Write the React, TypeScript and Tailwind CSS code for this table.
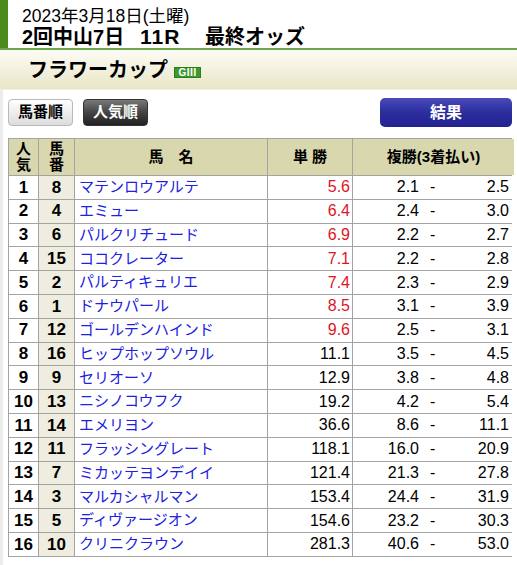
import React from "react";

type Row = { pop: number; num: number; name: string; win: string; red: boolean; lo: string; hi: string };

const rows: Row[] = [
  { pop: 1, num: 8, name: "マテンロウアルテ", win: "5.6", red: true, lo: "2.1", hi: "2.5" },
  { pop: 2, num: 4, name: "エミュー", win: "6.4", red: true, lo: "2.4", hi: "3.0" },
  { pop: 3, num: 6, name: "パルクリチュード", win: "6.9", red: true, lo: "2.2", hi: "2.7" },
  { pop: 4, num: 15, name: "ココクレーター", win: "7.1", red: true, lo: "2.2", hi: "2.8" },
  { pop: 5, num: 2, name: "パルティキュリエ", win: "7.4", red: true, lo: "2.3", hi: "2.9" },
  { pop: 6, num: 1, name: "ドナウパール", win: "8.5", red: true, lo: "3.1", hi: "3.9" },
  { pop: 7, num: 12, name: "ゴールデンハインド", win: "9.6", red: true, lo: "2.5", hi: "3.1" },
  { pop: 8, num: 16, name: "ヒップホップソウル", win: "11.1", red: false, lo: "3.5", hi: "4.5" },
  { pop: 9, num: 9, name: "セリオーソ", win: "12.9", red: false, lo: "3.8", hi: "4.8" },
  { pop: 10, num: 13, name: "ニシノコウフク", win: "19.2", red: false, lo: "4.2", hi: "5.4" },
  { pop: 11, num: 14, name: "エメリヨン", win: "36.6", red: false, lo: "8.6", hi: "11.1" },
  { pop: 12, num: 11, name: "フラッシングレート", win: "118.1", red: false, lo: "16.0", hi: "20.9" },
  { pop: 13, num: 7, name: "ミカッテヨンデイイ", win: "121.4", red: false, lo: "21.3", hi: "27.8" },
  { pop: 14, num: 3, name: "マルカシャルマン", win: "153.4", red: false, lo: "24.4", hi: "31.9" },
  { pop: 15, num: 5, name: "ディヴァージオン", win: "154.6", red: false, lo: "23.2", hi: "30.3" },
  { pop: 16, num: 10, name: "クリニクラウン", win: "281.3", red: false, lo: "40.6", hi: "53.0" },
];

const font = { fontFamily: '"Liberation Sans", "Noto Sans CJK JP", sans-serif' };

export default function App() {
  return (
    <div className="w-[517px] h-[565px] bg-white overflow-hidden text-black" style={font}>
      {/* Title */}
      <div className="flex h-[48px]">
        <div className="w-[8px] bg-[#4b8a1c]" />
        <div className="pl-[14px] pt-[6px] flex flex-col">
          <div className="text-[17.5px] leading-[20px]">2023年3月18日(土曜)</div>
          <div className="text-[20px] leading-[21px] font-bold flex items-baseline">
            <span className="w-[118px]">2回中山7日</span>
            <span className="w-[65px] text-[21px] tracking-[1px]">11R</span>
            <span>最終オッズ</span>
          </div>
        </div>
      </div>
      <div className="h-[2px] bg-[#6ba54a]" />
      {/* Race name band */}
      <div className="h-[40px] bg-gradient-to-b from-[#fdfcf5] to-[#e9e6c8] flex items-center pl-[28px] border-b border-[#f3f1e4]">
        <span className="text-[20px] font-bold leading-none">フラワーカップ</span>
        <span className="ml-[6px] mt-[6px] w-[27px] h-[11px] bg-[#3c9a2c] border border-[#2d7d1f] text-white text-[10px] leading-[10px] font-bold flex items-center justify-center">GⅢ</span>
      </div>
      <div className="border-l-[3px] border-[#ececec] ml-0 pl-[5px] pr-[5px] pt-[9px] h-[475px]">
        {/* Buttons */}
        <div className="flex items-start">
          <div className="w-[65px] h-[27px] rounded-[4px] border border-[#b9b9b9] bg-gradient-to-b from-[#ffffff] to-[#dcdcdc] flex items-center justify-center text-[15px] font-bold">馬番順</div>
          <div className="ml-[10px] w-[65px] h-[27px] rounded-[4px] border border-[#333] bg-gradient-to-b from-[#7a7a7a] via-[#444] to-[#222] flex items-center justify-center text-[15px] font-bold text-white">人気順</div>
          <div className="ml-auto -mt-[1px] w-[132px] h-[29px] rounded-[5px] bg-gradient-to-b from-[#4a4ab8] via-[#2d2d9e] to-[#222290] flex items-center justify-center text-[16px] font-bold text-white">結果</div>
        </div>
        {/* Table */}
        <div className="mt-[11px] w-[504px] bg-[#a3a3a3] p-px grid grid-cols-[29px_35px_192px_84px_161px] gap-px">
          <div className="h-[36px] bg-[#d9d7ae] flex flex-col items-center justify-center text-[15px] font-bold leading-[16px]"><span>人</span><span>気</span></div>
          <div className="h-[36px] bg-[#d9d7ae] flex flex-col items-center justify-center text-[15px] font-bold leading-[16px]"><span>馬</span><span>番</span></div>
          <div className="h-[36px] bg-[#d9d7ae] flex items-center justify-center text-[15px] font-bold">馬　名</div>
          <div className="h-[36px] bg-[#d9d7ae] flex items-center justify-center text-[15px] font-bold">単 勝</div>
          <div className="h-[36px] bg-[#d9d7ae] flex items-center justify-center text-[15px] font-bold">複勝(3着払い)</div>
          {rows.map((r) => (
            <React.Fragment key={r.pop}>
              <div className="h-[22.8px] bg-white flex items-center justify-center text-[17px] font-bold">{r.pop}</div>
              <div className="h-[22.8px] bg-[#efeddf] flex items-center justify-center text-[17px] font-bold">{r.num}</div>
              <div className="h-[22.8px] bg-white flex items-center pl-[4px] text-[15px] text-[#2020e0]">{r.name}</div>
              <div className={`h-[22.8px] bg-white flex items-center justify-end pr-[2px] text-[16px] ${r.red ? "text-[#e0141e]" : "text-black"}`}>{r.win}</div>
              <div className="h-[22.8px] bg-white flex items-center text-[16px] pr-[5px]">
                <span className="w-[66px] text-right">{r.lo}</span>
                <span className="ml-[11px]">-</span>
                <span className="ml-auto">{r.hi}</span>
              </div>
            </React.Fragment>
          ))}
        </div>
      </div>
    </div>
  );
}
